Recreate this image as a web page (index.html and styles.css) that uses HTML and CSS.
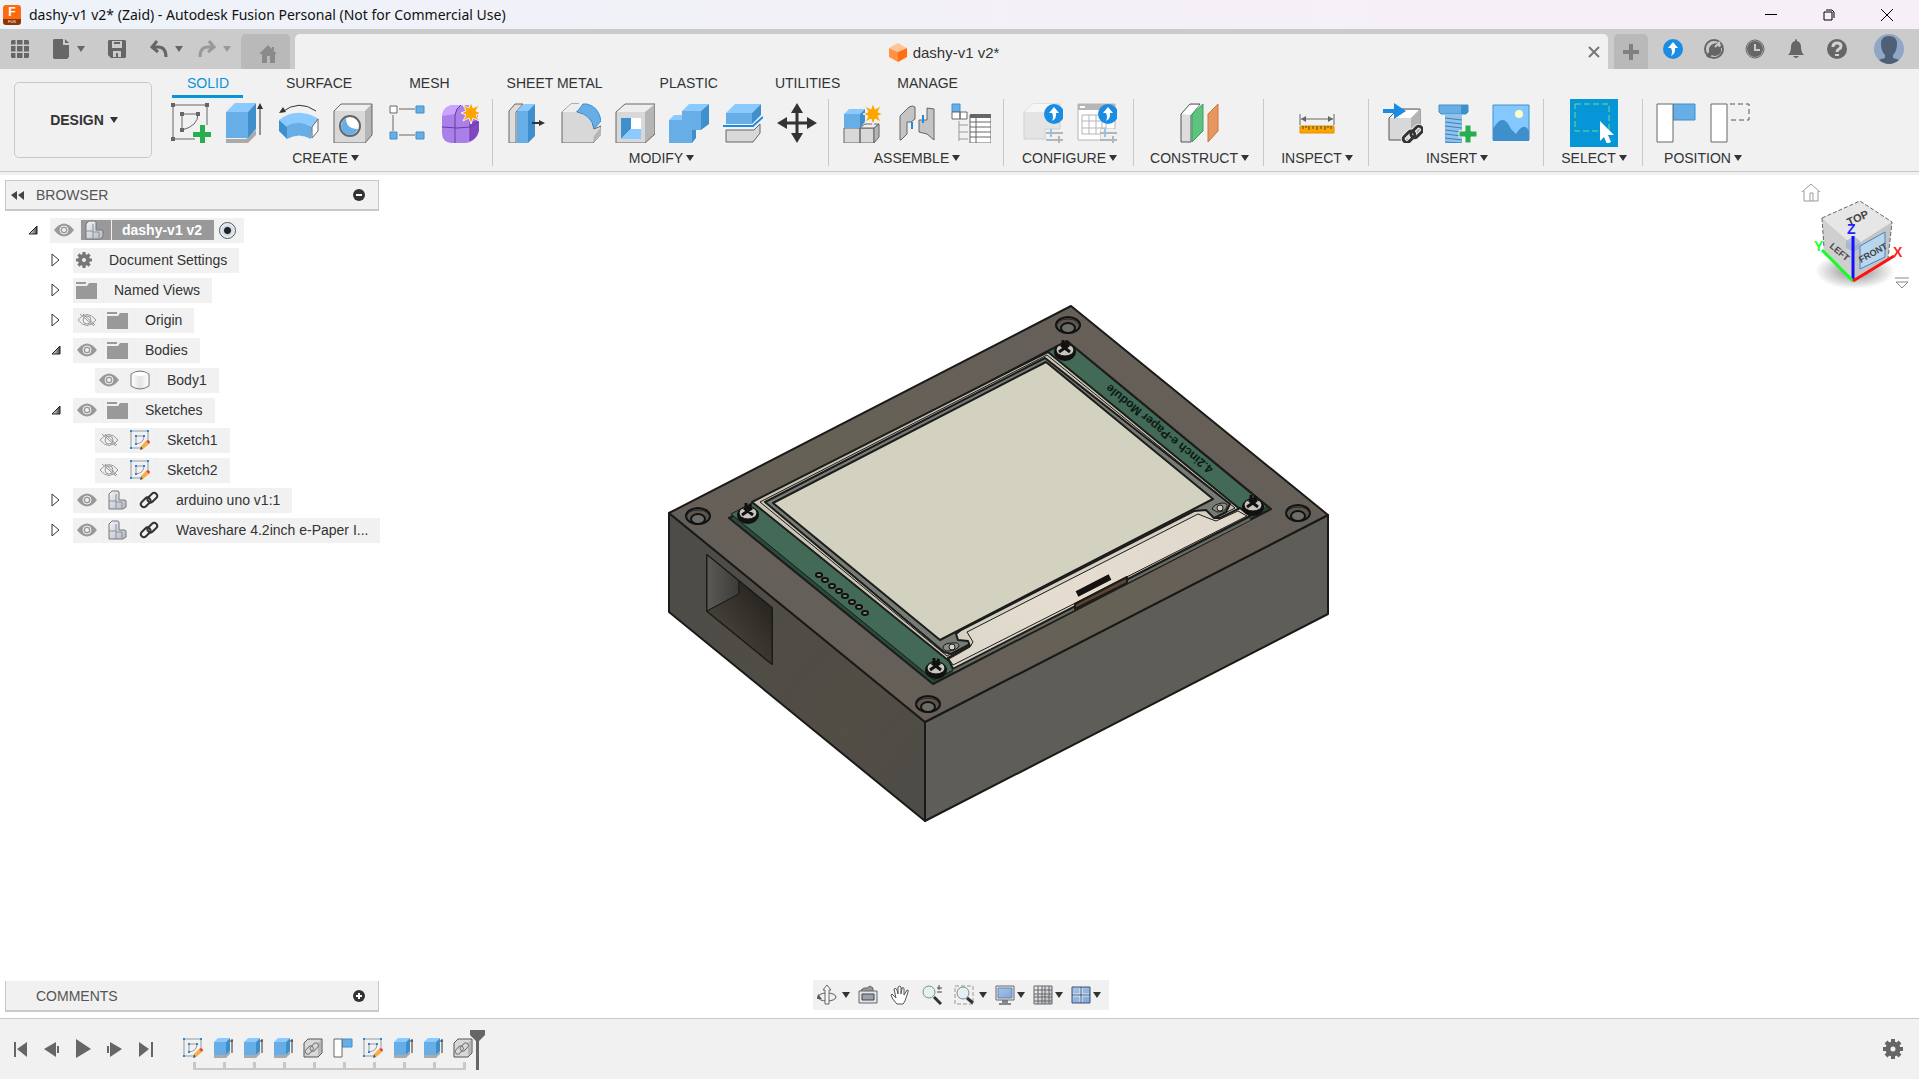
FILE: index.html
```html
<!DOCTYPE html>
<html lang="en">

<head>
    <meta charset="UTF-8">
    <meta name="viewport" content="width=device-width, initial-scale=1.0">
    <title>dashy-v1 v2* (Zaid) - Autodesk Fusion Personal</title>
    <link rel="stylesheet" href="styles.css">
</head>

<body>
    <!-- icon sprite -->
    <svg class="sprite" aria-hidden="true">
        <defs>
            <linearGradient id="g-part" x1="0" y1="0" x2="1" y2="1">
                <stop offset="0" stop-color="#f0f4fa"/><stop offset="1" stop-color="#b4b9c2"/>
            </linearGradient>
            <linearGradient id="g-body" x1="0" y1="0" x2="1" y2="0">
                <stop offset="0" stop-color="#fff"/><stop offset=".5" stop-color="#e4e4e6"/><stop offset="1" stop-color="#fff"/>
            </linearGradient>
            <linearGradient id="g-screen" x1="0" y1="0" x2="1" y2="1">
                <stop offset="0" stop-color="#a8c4e8"/><stop offset="1" stop-color="#7fa6d8"/>
            </linearGradient>
            <linearGradient id="g-tri" x1="0" y1="0" x2="1" y2="0">
                <stop offset="0" stop-color="#fff"/><stop offset="1" stop-color="#444"/>
            </linearGradient>
        </defs>

        <!-- bar icons -->
        <symbol id="i-grid" viewBox="0 0 20 20"><path fill="#666" d="M2 1h4v5H1V2zM7 1h6v5H7zM14 1h4l1 1v4h-5zM1 7h5v6H1zM7 7h6v6H7zM14 7h5v6h-5zM1 14h5v5H2l-1-1zM7 14h6v5H7zM14 14h5v4l-1 1h-4z"/><path d="M6 1v18M13 1v18M1 6h18M1 13h18" stroke="#cbcbcb"/></symbol>
        <symbol id="i-file" viewBox="0 0 20 20"><path fill="#666" d="M3 0h9v6h6v12l-2 2H3l-1-1V1zM14 0l4 4h-4z"/></symbol>
        <symbol id="i-save" viewBox="0 0 20 20"><path fill="#666" fill-rule="evenodd" d="M2 1h16l1 1v16l-1 1H4l-3-3V2zM5 2v7h10V2zm1 10v6h3v-4h2v4h3v-6zM7 3h6v2H7z"/></symbol>
        <symbol id="i-undo" viewBox="0 0 20 20"><path d="M8 2L3 8l6 5M3 8h6q8 0 8 10" fill="none" stroke="currentColor" stroke-width="3"/></symbol>
        <symbol id="i-redo" viewBox="0 0 20 20"><path d="M12 2l5 6-6 5M17 8h-6q-8 0-8 10" fill="none" stroke="currentColor" stroke-width="3"/></symbol>
        <symbol id="i-home" viewBox="0 0 20 20"><path fill="#8a8a8a" d="M10 1l9 9h-2v9h-5v-7H9v7H4v-9H1zM14 3h2v3h-2z"/></symbol>
        <symbol id="i-up" viewBox="0 0 20 20"><circle cx="10" cy="10" r="10" fill="#1b8ce4"/><path fill="#fff" d="M10 3l5 6h-3q1 5-4 8 2-4 0-8H5z"/></symbol>
        <symbol id="i-plug" viewBox="0 0 20 20"><circle cx="10" cy="10" r="9" fill="none" stroke="#666" stroke-width="2"/><path fill="#666" d="M2 17q2-3 3-4-1-6 4-8l2-1 6 6q1 6-6 7-2 0-3-1l-3 3z"/><path d="M9 9l5-5M13 12l5-5" stroke="#666" stroke-width="2"/><path d="M11 8l5-5" stroke="#cbcbcb" stroke-width="2"/></symbol>
        <symbol id="i-clock" viewBox="0 0 20 20"><circle cx="10" cy="10" r="9" fill="none" stroke="#666"/><circle cx="10" cy="10" r="8" fill="#666"/><path d="M10 5v6h5" fill="none" stroke="#cbcbcb" stroke-width="2"/></symbol>
        <symbol id="i-bell" viewBox="0 0 20 20"><path fill="#666" d="M10 0q1 0 1 2 4 1 4 6 0 5 3 8H2q3-3 3-8 0-5 4-6 0-2 1-2zM7 17h6q-3 4-6 0z"/></symbol>
        <symbol id="i-help" viewBox="0 0 20 20"><circle cx="10" cy="10" r="10" fill="#666"/><path d="M6 8q0-4 4-4t4 3q0 2-2 3t-2 3" fill="none" stroke="#d2d2d2" stroke-width="3"/><path d="M8 15h4v2H8z" fill="#d2d2d2"/></symbol>
        <symbol id="i-user" viewBox="0 0 30 30"><circle cx="15" cy="15" r="15" fill="#8fa6c6"/><path fill="#4f6076" d="M15 2q8 0 8 8 0 7-4 11v3q4 1 6 2-10 8-20 0 2-1 6-2v-3q-4-4-4-11 0-8 8-8z"/></symbol>
        <symbol id="i-doc" viewBox="0 0 20 20"><path fill="#ffc49a" d="M10 1l9 5-9 4-9-4z"/><path fill="#ff9244" d="M1 6l9 4v10l-9-5z"/><path fill="#ff6f0f" d="M19 6l-9 4v10l9-5z"/></symbol>

        <!-- ribbon tools, 40px -->
        <symbol id="i-sketch" viewBox="0 0 40 40"><path d="M2 2h34v20M2 2v34h22M11 11h16M11 11v16M27 11q0 12-16 16" fill="none" stroke="#666"/><path fill="#666" d="M0 0h4v4H0zM34 0h4v4h-4zM0 34h4v4H0zM9 9h4v4H9zM25 9h4v4h-4zM9 25h4v4H9z"/><path fill="#27ae4f" d="M29 22h5v7h7v5h-7v7h-5v-7h-7v-5h7z"/></symbol>
        <symbol id="i-extrude" viewBox="0 0 40 40"><path fill="#aaa" d="M1 36h20l10-9v5l-9 9H1z"/><path fill="#68aee6" d="M1 9h22v26H1z"/><path fill="#8acaff" d="M10 0h21l-8 9H1z"/><path fill="#3f8fcd" d="M31 0v26l-8 9V9z"/><path d="M35 32V4" stroke="#333"/><path fill="#333" d="M35 0l3 6h-6z"/></symbol>
        <symbol id="i-revolve" viewBox="0 0 40 40"><path d="M3 9Q20-4 37 8" fill="none" stroke="#333"/><path fill="#333" d="M0 10l4-6 3 5z"/><path fill="#8acaff" d="M0 17Q18 3 40 16l-7 8Q20 16 8 24z"/><path fill="#68aee6" d="M8 23q12-7 25 1l-1 12Q20 29 8 36z"/><path fill="#3f8fcd" d="M0 17l8 7v12l-8-8z"/><path d="M33 24l6-8v12l-6 7z" fill="#fff" stroke="#666"/></symbol>
        <symbol id="i-hole" viewBox="0 0 40 40"><path d="M1 8l7-7h31v31l-7 8H1z" fill="#d8d8d8"/><path d="M1 8l7-7h31l-7 7z" fill="#eee"/><path d="M39 1v31l-7 8V8z" fill="#b5b5b5"/><path d="M1 8l7-7h31v31l-7 8H1z" fill="none" stroke="#666"/><circle cx="17" cy="23" r="10" fill="#fff" stroke="#666" stroke-width="2"/><path fill="#68aee6" d="M13 15q0 11 12 11-3 6-9 6-6-1-8-7 0-7 5-10z"/></symbol>
        <symbol id="i-pattern" viewBox="0 0 40 40"><path d="M12 6h16M6 12v16M12 32h16" stroke="#666" stroke-width="1"/><path d="M3 3h7v7H3z" fill="#fff" stroke="#666"/><path d="M29 3h8v7h-8zM3 29h7v7H3zM29 29h8v7h-8z" fill="#68aee6" stroke="#3f8fcd"/></symbol>
        <symbol id="i-form" viewBox="0 0 40 40"><path d="M1 14Q2 2 14 2h12q11 2 11 12v15q-3 10-12 11H10q-9-1-9-10z" fill="#a97fe8"/><path d="M1 14Q2 2 14 2h12q-10 0-12 9L1 13z" fill="#c9a5ff"/><path d="M29 20l9-4v12q-2 8-9 10z" fill="#8049c0"/><path d="M1 24q16 2 28 0l9-5M14 40V12q1-7 6-10M29 38V14" fill="none" stroke="#6c3aa8"/><path fill="#ffa500" stroke="#f1f1f1" d="M30-1l2 6 6-3-3 6 5 2-5 2 3 6-6-3-2 6-2-6-6 3 3-6-5-2 5-2-3-6 6 3z"/></symbol>
        <symbol id="i-press" viewBox="0 0 40 40"><path d="M2 8l6-7h8L9 9v31H2z" fill="#ddd" stroke="#666"/><path fill="#68aee6" d="M10 8h11v32H10z"/><path fill="#8acaff" d="M17 1h11l-7 7H10z"/><path fill="#3f8fcd" d="M28 1v32l-7 7V8z"/><path d="M25 20h9" stroke="#333" stroke-width="2"/><path fill="#333" d="M32 17l6 3-6 3z"/></symbol>
        <symbol id="i-fillet" viewBox="0 0 40 40"><path d="M1 9l9-8h8l-3 7q16 1 18 18l7-3v8l-8 9H1z" fill="#d8d8d8" stroke="#666"/><path d="M1 9l9-8h10l-5 8z" fill="#eee"/><path d="M33 33l7-9v8l-8 8z" fill="#b5b5b5"/><path fill="#68aee6" stroke="#3f8fcd" d="M22 1h4q12 3 14 17l-7 8Q31 12 16 9z"/></symbol>
        <symbol id="i-shell" viewBox="0 0 40 40"><path d="M1 9l9-8h30l-10 8z" fill="#eee"/><path d="M1 9h29v31H1z" fill="#d8d8d8"/><path d="M40 1v30l-10 9V9z" fill="#b5b5b5"/><path d="M1 9l9-8h30v30l-10 9H1z" fill="none" stroke="#666"/><path d="M6 15h20v21H6z" fill="#fff"/><path fill="#3f8fcd" d="M6 15h10v11L6 36z"/><path fill="#8acaff" d="M16 26h10v10H6z"/></symbol>
        <symbol id="i-combine" viewBox="0 0 40 40"><path fill="#68aee6" d="M0 17h13V8h19v19h-9v13H0z"/><path fill="#8acaff" d="M13 8l7-7h20l-8 7zM0 17l5-5h8v5z"/><path fill="#3f8fcd" d="M40 1v20l-8 6V8zM23 27h4v8l-4 5z"/></symbol>
        <symbol id="i-split" viewBox="0 0 40 40"><path fill="#68aee6" d="M3 10h26v11H3z"/><path fill="#8acaff" d="M12 1h26l-9 9H3z"/><path fill="#3f8fcd" d="M38 1v11l-9 9V10z"/><path d="M0 23h30l10-9" stroke="#1b8ce4" fill="none" stroke-width="2"/><path d="M3 27h28l6-6v9l-7 9H3z" fill="#d8d8d8" stroke="#666"/></symbol>
        <symbol id="i-move" viewBox="0 0 40 40"><path d="M20 5v30M5 20h30" stroke="#333" stroke-width="3"/><path fill="#333" d="M20 0l6 10H14zM20 40l6-10H14zM0 20l10-6v12zM40 20l-10-6v12z"/></symbol>
        <symbol id="i-component" viewBox="0 0 40 40"><path d="M1 25h16v15H1zM17 25h14v15H17z" fill="#d8d8d8" stroke="#666"/><path d="M17 25l5-4h14l-5 4z" fill="#eee" stroke="#666"/><path d="M36 21v13l-5 6V25z" fill="#b5b5b5" stroke="#666"/><path fill="#68aee6" d="M1 11h16v14H1z"/><path fill="#8acaff" d="M6 6h16l-5 5H1z"/><path fill="#3f8fcd" d="M22 6v13l-5 6V11z"/><path fill="#ffa500" stroke="#f1f1f1" d="M30 0l2 6 6-3-3 6 5 2-5 2 3 6-6-3-2 6-2-6-6 3 3-6-5-2 5-2-3-6 6 3z"/></symbol>
        <symbol id="i-joint" viewBox="0 0 40 40"><path d="M3 13l9-9q4-2 6 0v12l-4 3-4 0v12l-6 6H3z" fill="#c4c4c4" stroke="#666"/><path d="M37 6v31l-7-6-8-2V17l8 0V5z" fill="#c4c4c4" stroke="#666"/><path d="M15 19v7M26 12v8" stroke="#1b8ce4" stroke-width="2"/></symbol>
        <symbol id="i-bom" viewBox="0 0 40 40"><path d="M1 1h8v8H1z" fill="#68aee6" stroke="#3f8fcd"/><path d="M1 9h8v7H1zM9 9h7v7H9z" fill="#fff" stroke="#666"/><path d="M8 18v20M8 22h9M8 29h9M8 36h9" stroke="#999" fill="none"/><path d="M19 12h21v28H19z" fill="#fff" stroke="#666"/><path fill="#666" d="M19 11h21v4H19z"/><path d="M19 19h21M19 24h21M19 29h21M19 34h21M25 15v25" stroke="#666"/></symbol>
        <symbol id="i-config" viewBox="0 0 40 40"><path d="M1 9l9-8h27v25H22v10H1z" fill="#e4e4e4" stroke="#cfcfcf"/><path d="M1 9l9-8h20v8z" fill="#f6f6f6"/><path d="M23 30h18M23 37h18" stroke="#b5b5b5" stroke-width="2"/><path d="M28 26v8" stroke="#8cc4f0" stroke-width="2"/><path d="M36 33v8" stroke="#b5b5b5" stroke-width="2"/><circle cx="31" cy="11" r="10" fill="#1b8ce4"/><path fill="#fff" d="M31 4l5 6h-3q1 5-4 8 2-4 0-8h-3z"/></symbol>
        <symbol id="i-ctable" viewBox="0 0 40 40"><path d="M1 1h37v25H24v11H1z" fill="#fff" stroke="#b5b5b5"/><path fill="#b5b5b5" d="M1 1h37v6H1z"/><path fill="#fff" d="M3 3h5v2H3z"/><path d="M5 12h24v19H5zM5 18h24M5 25h24M12 12v19M19 12v19M25 12v19" fill="none" stroke="#b5b5b5"/><path fill="#f1f1f1" d="M24 26h17v15H24z"/><path d="M23 30h18M23 37h18" stroke="#b5b5b5" stroke-width="2"/><path d="M28 26v8" stroke="#8cc4f0" stroke-width="2"/><path d="M36 33v8" stroke="#b5b5b5" stroke-width="2"/><circle cx="31" cy="11" r="10" fill="#1b8ce4"/><path fill="#fff" d="M31 4l5 6h-3q1 5-4 8 2-4 0-8h-3z"/></symbol>
        <symbol id="i-plane" viewBox="0 0 40 40"><path d="M1 11l9-10h10L11 12v27H1z" fill="#ddd" stroke="#555"/><path fill="#fff" d="M2 11l8-9h9l-8 10z"/><path fill="#5cc47c" stroke="#39a05c" d="M12 11l11-10v27L12 39z"/><path fill="#e8965f" stroke="#c97742" d="M28 11L38 1v27L28 39z"/></symbol>
        <symbol id="i-measure" viewBox="0 0 40 40"><path d="M3 11v11M37 11v11M4 16h32" stroke="#666"/><path fill="#666" d="M4 16l5-3v6zM36 16l-5-3v6z"/><path fill="#ffa500" stroke="#e09000" d="M3 23h34v7H3z"/><path d="M6 23v3M9 23v2M12 23v4M16 23v3M20 23v4M24 23v3M28 23v4M31 23v2M34 23v3" stroke="#444"/></symbol>
        <symbol id="i-derive" viewBox="0 0 40 40"><path d="M6 15l9-9h22v20l-9 11H6z" fill="#d8d8d8" stroke="#555"/><path d="M7 15l8-8h21l-8 8z" fill="#fff"/><path d="M37 6v20l-9 9V15z" fill="#b5b5b5"/><path fill="#1b8ce4" d="M0 6h11V0l12 8-12 8v-6H0z"/><g fill="none" stroke="#f1f1f1" stroke-width="5"><rect x="19" y="30" width="13" height="7" rx="3" transform="rotate(-45 26 33)"/><rect x="27" y="26" width="13" height="7" rx="3" transform="rotate(-45 33 29)"/></g><g fill="none" stroke="#333" stroke-width="3"><rect x="19" y="30" width="13" height="7" rx="3" transform="rotate(-45 26 33)"/><rect x="27" y="26" width="13" height="7" rx="3" transform="rotate(-45 33 29)"/></g></symbol>
        <symbol id="i-bolt" viewBox="0 0 40 40"><path fill="#68aee6" stroke="#3f8fcd" d="M2 2h29v7l-2 2H4L2 9z"/><path fill="#3f8fcd" d="M24 2h7v7l-2 2h-5z"/><path fill="#8fc3ee" d="M8 12h17v28H8z"/><path d="M8 15l17 2M8 19l17 2M8 23l17 2M8 27l17 2M8 31l17 2M8 35l17 2M8 39l17 1" stroke="#3f7fb5"/><path fill="#27ae4f" stroke="#f1f1f1" d="M28 22h6v6h6v6h-6v6h-6v-6h-6v-6h6z"/></symbol>
        <symbol id="i-image" viewBox="0 0 40 40"><path fill="#84c8ff" stroke="#3f8fcd" d="M2 2h36v35H2z"/><path fill="#3f8fcd" d="M2 26q10-18 18 0l5 5q8-13 13-3v10H2z"/><circle cx="28" cy="11" r="4" fill="#ffffc8"/></symbol>
        <symbol id="i-select" viewBox="0 0 40 40"><path d="M1 1h34v27H1z" fill="none" stroke="#6fdc86" stroke-dasharray="6 3"/><path fill="#fff" d="M26 18l14 14h-6l3 7-4 2-3-7-4 4z"/></symbol>
        <symbol id="i-capture" viewBox="0 0 40 40"><path d="M17 1h22v16H17z" fill="#68aee6" stroke="#3f8fcd"/><path d="M1 1h16v38H1z" fill="#fff" stroke="#666"/></symbol>
        <symbol id="i-revert" viewBox="0 0 40 40"><path d="M20 1h19v16H20" fill="none" stroke="#555" stroke-dasharray="5 3"/><path d="M1 1h16v38H1z" fill="#fff" stroke="#666"/></symbol>

        <!-- tree -->
        <symbol id="i-eye" viewBox="0 0 20 14"><path fill="#999" d="M0 7Q10-6 20 7 10 20 0 7z"/><circle cx="10" cy="7" r="4" fill="none" stroke="#f1f1f1" stroke-width="1"/><circle cx="10" cy="7" r="2" fill="#f1f1f1"/></symbol>
        <symbol id="i-eyeoff" viewBox="0 0 20 14"><path fill="none" stroke="#999" d="M1 7Q10-4 19 7 10 18 1 7zM3 1l14 12M6 1l12 11"/><circle cx="10" cy="7" r="4" fill="none" stroke="#999"/></symbol>
        <symbol id="i-folder" viewBox="0 0 21 17"><path fill="#999" d="M0 0h10v2H0zM0 4h11l2-3h8v16H0z"/></symbol>
        <symbol id="i-gear" viewBox="0 0 20 20"><circle cx="10" cy="10" r="5" fill="none" stroke="currentColor" stroke-width="5"/><path d="M10 0v4M10 16v4M0 10h4M16 10h4M3 3l3 3M14 14l3 3M17 3l-3 3M6 14l-3 3" stroke="currentColor" stroke-width="4"/></symbol>
        <symbol id="i-body" viewBox="0 0 20 20"><path d="M1 4q9-6 18 0v12q-9 6-18 0z" fill="url(#g-body)" stroke="#777"/><path d="M2 4q8-4 16 0-8 4-16 0z" fill="#fff"/></symbol>
        <symbol id="i-part" viewBox="0 0 20 20"><path d="M1 4l3-3h6l1 1v8h6l1 1v6l-3 2H1z" fill="url(#g-part)" stroke="#777"/><path d="M1 11h7M8 4v15M8 12h6v6" fill="none" stroke="#8b8f96"/></symbol>
        <symbol id="i-link" viewBox="0 0 20 20"><g fill="none" stroke="currentColor" stroke-width="2"><rect x="1" y="9" width="11" height="6" rx="3" transform="rotate(-45 7 12)"/><rect x="8" y="5" width="11" height="6" rx="3" transform="rotate(-45 13 8)"/></g></symbol>
        <symbol id="i-sk" viewBox="0 0 20 20"><path d="M2 1h16v12M1 2v16h10M6 6h8M6 6v8M14 6q0 7-8 8" fill="none" stroke="#999"/><path fill="#1b8ce4" d="M0 0h2v2H0zM17 0h2v2h-2zM0 17h2v2H0zM5 5h2v2H5zM13 5h2v2h-2zM5 13h2v2H5z"/><path fill="#f5b041" d="M16 11l3 3-6 5-2-3z"/><path fill="#e33" d="M16 11q3-2 4 1l-1 2z"/><path fill="#555" d="M11 16l2 3-3 1z"/></symbol>
        <symbol id="i-closed" viewBox="0 0 10 14"><path d="M1 1l7 6-7 6z" fill="#fff" stroke="#333"/></symbol>
        <symbol id="i-open" viewBox="0 0 10 10"><path d="M9 1v8H1z" fill="url(#g-tri)" stroke="#222"/></symbol>

        <!-- timeline and navigation -->
        <symbol id="i-ext" viewBox="0 0 20 20"><path fill="#aaa" d="M1 17h12l4-4v3l-4 4H1z"/><path fill="#68aee6" d="M1 4h12v13H1z"/><path fill="#8acaff" d="M5 0h12l-4 4H1z"/><path fill="#3f8fcd" d="M17 0v13l-4 4V4z"/><path d="M19 1v14" stroke="#333"/><path d="M17 3h3" stroke="#333"/></symbol>
        <symbol id="i-xref" viewBox="0 0 20 20"><path d="M1 5l4-4h14v14l-4 4H1z" fill="#d8d8d8" stroke="#555"/><path d="M18 2v13l-3 3V5z" fill="#b5b5b5"/><g fill="none" stroke="#777" stroke-width="1"><rect x="2" y="9" width="9" height="5" rx="2" transform="rotate(-45 7 12)"/><rect x="7" y="6" width="9" height="5" rx="2" transform="rotate(-45 12 9)"/></g></symbol>
        <symbol id="i-pos" viewBox="0 0 20 20"><path d="M9 1h10v8H9z" fill="#68aee6" stroke="#3f8fcd"/><path d="M1 1h8v18H1z" fill="#fff" stroke="#666"/></symbol>
        <symbol id="i-first" viewBox="0 0 20 20"><path fill="#666" d="M3 3h2v15H3zM16 3v15L6 10z"/></symbol>
        <symbol id="i-back" viewBox="0 0 20 20"><path fill="#666" d="M14 3v15L2 10zM15 7h2v7h-2z"/></symbol>
        <symbol id="i-play" viewBox="0 0 20 20"><path fill="#666" d="M3 0l15 10L3 19z"/></symbol>
        <symbol id="i-next" viewBox="0 0 20 20"><path fill="#666" d="M6 3v15l12-8zM3 7h2v7H3z"/></symbol>
        <symbol id="i-last" viewBox="0 0 20 20"><path fill="#666" d="M16 3h2v15h-2zM4 3v15l10-8z"/></symbol>
        <symbol id="i-orbit" viewBox="0 0 20 20"><ellipse cx="10" cy="12" rx="9" ry="4" fill="none" stroke="#555"/><path d="M8 19V5H6l4-5 4 5h-2v14z" fill="#f4f7fb" stroke="#666"/><path fill="#555" d="M1 9l4 5H0z"/></symbol>
        <symbol id="i-look" viewBox="0 0 20 20"><path d="M3 7V5l3-2h3l3-2 3 2v4" fill="#999" stroke="#666"/><path d="M1 6h18v12H1z" fill="#e2e5ea" stroke="#666"/><path d="M4 9h12v6H4z" fill="#9aa1ac" stroke="#444"/></symbol>
        <symbol id="i-pan" viewBox="0 0 20 20"><path d="M6 18q-4-4-5-8l1-1 4 4L4 4q2-2 3 1l1 4V2q2-2 3 0v7l1-6q2-1 2 1v6l3-5q2 0 1 2l-3 9-2 3H7z" fill="#fff" stroke="#555"/></symbol>
        <symbol id="i-zoom" viewBox="0 0 20 20"><circle cx="7" cy="7" r="6" fill="#e4f1f4" stroke="#888"/><path d="M12 12l7 7" stroke="#333" stroke-width="3"/><path d="M15 3h5M15 7h5M17 0v5" stroke="#444"/></symbol>
        <symbol id="i-fit" viewBox="0 0 20 20"><path d="M1 1h18v18H1z" fill="none" stroke="#999" stroke-dasharray="4 2"/><circle cx="9" cy="8" r="6" fill="#e4f1f4" stroke="#888"/><path d="M13 13l6 5" stroke="#333" stroke-width="3"/></symbol>
        <symbol id="i-display" viewBox="0 0 20 20"><path d="M7 15h6v3h3v2H4v-2h3z" fill="#888"/><path d="M1 1h18v14H1z" fill="#eee" stroke="#666"/><path fill="url(#g-screen)" stroke="#6484ac" d="M3 3h14v10H3z"/></symbol>
        <symbol id="i-gridset" viewBox="0 0 20 20"><path fill="url(#g-part)" d="M1 1h18v18H1z"/><path d="M1 1h18v18H1zM1 5h18M1 9h18M1 12h18M1 16h18M5 1v18M9 1v18M12 1v18M16 1v18" fill="none" stroke="#666"/></symbol>
        <symbol id="i-views" viewBox="0 0 20 20"><path d="M1 2h18v16H1z" fill="url(#g-screen)" stroke="#3c5577"/><path d="M2 10h16M10 3v14" stroke="#e4eefb" stroke-width="3"/><path d="M1 10h18M10 2v16" stroke="#3c5577"/></symbol>
        <symbol id="i-screw" viewBox="0 0 24 24"><ellipse cx="12" cy="14" rx="11" ry="9" fill="#111"/><ellipse cx="12" cy="12" rx="9" ry="6" fill="#c9c5bc" stroke="#111" stroke-width="1"/><path d="M6 14l10-7M8 7l9 7M10 2v6M15 3l-3 6" stroke="#111" stroke-width="3"/></symbol>
        <symbol id="i-bore" viewBox="0 0 28 20"><ellipse cx="14" cy="10" rx="12" ry="8" fill="#5a564e" stroke="#111" stroke-width="2"/><path d="M2 11Q4 4 14 4t12 7" fill="none" stroke="#222"/><ellipse cx="14" cy="13" rx="7" ry="5" fill="#6c6c69" stroke="#111" stroke-width="2"/></symbol>
    </svg>

    <header class="titlebar">
        <span class="app-logo"><b>F</b><i>FUS</i></span>
        <h1>dashy-v1 v2* (Zaid) - Autodesk Fusion Personal (Not for Commercial Use)</h1>
        <div class="window-buttons">
            <button aria-label="Minimize"><svg width="12" height="12" viewBox="0 0 12 12"><path d="M0 5h12v1H0z"/></svg></button>
            <button aria-label="Restore"><svg width="12" height="12" viewBox="0 0 12 12"><path d="M1 3h8v8H1zM3 1h6l2 2v6" fill="none" stroke="#000"/></svg></button>
            <button aria-label="Close"><svg width="12" height="12" viewBox="0 0 12 12"><path d="M0 0l12 12M12 0L0 12" stroke="#000"/></svg></button>
        </div>
    </header>

    <div class="tabstrip">
        <div class="quick">
            <button aria-label="Data panel"><svg class="i20"><use href="#i-grid"/></svg></button>
            <button class="file" aria-label="File"><svg class="i20"><use href="#i-file"/></svg><span class="caret"></span></button>
            <button class="save" aria-label="Save"><svg class="i20"><use href="#i-save"/></svg></button>
            <button class="undo" aria-label="Undo"><svg class="i20"><use href="#i-undo"/></svg><span class="caret"></span></button>
            <button class="redo" aria-label="Redo"><svg class="i20"><use href="#i-redo"/></svg><span class="caret"></span></button>
        </div>
        <button class="home-tab" aria-label="Home"><svg class="i20"><use href="#i-home"/></svg></button>
        <div class="doc-tab">
            <span class="doc-name"><svg class="i20"><use href="#i-doc"/></svg>dashy-v1 v2*</span>
            <button aria-label="Close document"><svg width="12" height="12" viewBox="0 0 12 12"><path d="M1 1l10 10M11 1L1 11" stroke="#777" stroke-width="2"/></svg></button>
        </div>
        <button class="new-tab" aria-label="New document"><svg width="16" height="16" viewBox="0 0 16 16"><path d="M8 0v16M0 8h16" stroke="#808080" stroke-width="4"/></svg></button>
        <div class="account">
            <button aria-label="Updates"><svg class="i20"><use href="#i-up"/></svg></button>
            <button aria-label="Extensions"><svg class="i20"><use href="#i-plug"/></svg></button>
            <button aria-label="Job status"><svg class="i20"><use href="#i-clock"/></svg></button>
            <button aria-label="Notifications"><svg class="i20"><use href="#i-bell"/></svg></button>
            <button aria-label="Help"><svg class="i20"><use href="#i-help"/></svg></button>
            <button class="avatar" aria-label="Account"><svg class="i30"><use href="#i-user"/></svg></button>
        </div>
    </div>

    <div class="toolbar">
        <button class="workspace">DESIGN <span class="caret"></span></button>
        <div class="ribbon">
            <nav class="ribbon-tabs">
                <a href="#" class="active">SOLID</a>
                <a href="#">SURFACE</a>
                <a href="#">MESH</a>
                <a href="#">SHEET METAL</a>
                <a href="#">PLASTIC</a>
                <a href="#">UTILITIES</a>
                <a href="#">MANAGE</a>
            </nav>
            <div class="groups">
                <div class="group">
                    <div class="tools">
                        <button aria-label="Create Sketch"><svg class="i40"><use href="#i-sketch"/></svg></button>
                        <button aria-label="Extrude"><svg class="i40"><use href="#i-extrude"/></svg></button>
                        <button aria-label="Revolve"><svg class="i40"><use href="#i-revolve"/></svg></button>
                        <button aria-label="Hole"><svg class="i40"><use href="#i-hole"/></svg></button>
                        <button aria-label="Pattern"><svg class="i40"><use href="#i-pattern"/></svg></button>
                        <button aria-label="Create Form"><svg class="i40"><use href="#i-form"/></svg></button>
                    </div>
                    <button class="menu">CREATE <span class="caret"></span></button>
                </div>
                <div class="group">
                    <div class="tools">
                        <button aria-label="Press Pull"><svg class="i40"><use href="#i-press"/></svg></button>
                        <button aria-label="Fillet"><svg class="i40"><use href="#i-fillet"/></svg></button>
                        <button aria-label="Shell"><svg class="i40"><use href="#i-shell"/></svg></button>
                        <button aria-label="Combine"><svg class="i40"><use href="#i-combine"/></svg></button>
                        <button aria-label="Split Body"><svg class="i40"><use href="#i-split"/></svg></button>
                        <button aria-label="Move"><svg class="i40"><use href="#i-move"/></svg></button>
                    </div>
                    <button class="menu">MODIFY <span class="caret"></span></button>
                </div>
                <div class="group">
                    <div class="tools">
                        <button aria-label="New Component"><svg class="i40"><use href="#i-component"/></svg></button>
                        <button aria-label="Joint"><svg class="i40"><use href="#i-joint"/></svg></button>
                        <button aria-label="Bill of Materials"><svg class="i40"><use href="#i-bom"/></svg></button>
                    </div>
                    <button class="menu">ASSEMBLE <span class="caret"></span></button>
                </div>
                <div class="group">
                    <div class="tools">
                        <button aria-label="Configure"><svg class="i40"><use href="#i-config"/></svg></button>
                        <button aria-label="Configuration Table"><svg class="i40"><use href="#i-ctable"/></svg></button>
                    </div>
                    <button class="menu">CONFIGURE <span class="caret"></span></button>
                </div>
                <div class="group">
                    <div class="tools">
                        <button aria-label="Offset Plane"><svg class="i40"><use href="#i-plane"/></svg></button>
                    </div>
                    <button class="menu">CONSTRUCT <span class="caret"></span></button>
                </div>
                <div class="group">
                    <div class="tools">
                        <button aria-label="Measure"><svg class="i40"><use href="#i-measure"/></svg></button>
                    </div>
                    <button class="menu">INSPECT <span class="caret"></span></button>
                </div>
                <div class="group">
                    <div class="tools">
                        <button aria-label="Insert Derive"><svg class="i40"><use href="#i-derive"/></svg></button>
                        <button aria-label="Insert Fastener"><svg class="i40"><use href="#i-bolt"/></svg></button>
                        <button aria-label="Canvas"><svg class="i40"><use href="#i-image"/></svg></button>
                    </div>
                    <button class="menu">INSERT <span class="caret"></span></button>
                </div>
                <div class="group">
                    <div class="tools">
                        <button class="selected" aria-label="Select"><svg class="i40"><use href="#i-select"/></svg></button>
                    </div>
                    <button class="menu">SELECT <span class="caret"></span></button>
                </div>
                <div class="group">
                    <div class="tools">
                        <button aria-label="Capture Position"><svg class="i40"><use href="#i-capture"/></svg></button>
                        <button aria-label="Revert Position"><svg class="i40"><use href="#i-revert"/></svg></button>
                    </div>
                    <button class="menu">POSITION <span class="caret"></span></button>
                </div>
            </div>
        </div>
    </div>

    <main class="viewport">
        <svg class="scene" viewBox="0 175 1919 843">
            <defs>
                <linearGradient id="m-top" x1="0" y1="1" x2="1" y2="0">
                    <stop offset="0" stop-color="#666155"/><stop offset=".25" stop-color="#655f59"/><stop offset=".45" stop-color="#666155"/><stop offset=".7" stop-color="#655f59"/><stop offset="1" stop-color="#656055"/>
                </linearGradient>
                <linearGradient id="m-left" x1="0" y1="0" x2="1" y2="1">
                    <stop offset="0" stop-color="#4d4c48"/><stop offset=".7" stop-color="#524d45"/><stop offset="1" stop-color="#4d4c48"/>
                </linearGradient>
                <linearGradient id="m-hole" x1="0" y1="0" x2="1" y2="0">
                    <stop offset="0" stop-color="#5b5a57"/><stop offset="1" stop-color="#3c3b38"/>
                </linearGradient>
                <linearGradient id="m-floor" x1="0" y1="1" x2="1" y2="0">
                    <stop offset="0" stop-color="#575146"/><stop offset="1" stop-color="#1f1d1a"/>
                </linearGradient>
                <linearGradient id="m-flap" x1="0" y1="1" x2="1" y2="0">
                    <stop offset="0" stop-color="#d9d6c9"/><stop offset=".4" stop-color="#e6ddd0"/><stop offset="1" stop-color="#dfd8ca"/>
                </linearGradient>
                <radialGradient id="m-shadow">
                    <stop offset="0" stop-color="#555" stop-opacity=".7"/><stop offset="1" stop-color="#555" stop-opacity="0"/>
                </radialGradient>
            </defs>

            <!-- enclosure -->
            <g stroke="#1a1a18" stroke-width="2" stroke-linejoin="round">
                <path fill="url(#m-left)" d="M669 513L925 722V821L669 612z"/>
                <path fill="#5f5d58" d="M1328 515L925 722V821L1328 614z"/>
                <path fill="url(#m-top)" d="M669 513L1071 306 1328 515 925 722z"/>
                <path fill="#3c3b38" d="M707 555L772 608V664L707 611z"/>
                <path fill="url(#m-hole)" stroke-width="1" d="M707 555L739 581V594L707 611z"/>
                <path fill="url(#m-floor)" stroke-width="1" d="M739 581L772 608V664L707 611 739 594z"/>
            </g>

            <!-- display board -->
            <g stroke="#1c1c1a" stroke-linejoin="round">
                <path fill="#2a4a3d" stroke-width="2" d="M729 518L1067 341 1271 509 933 684z"/>
                <path fill="#426a57" d="M731 514L1067 342 1267 507 934 680z"/>
                <path fill="#c9c6b7" stroke-width="2" d="M752 502L1048 352 1241 510 949 661z"/>
                <path fill="none" d="M760 502L1047 355 1235 508 947 656z"/>
                <path fill="#777b76" stroke-width="2" d="M765 502L1045 358 1230 504 1226 512 951 654 944 652z"/>
                <path fill="#d3d1c0" stroke-width="2" d="M773 503L1046 362 1213 499 940 640z"/>
                <path fill="#d5d1c4" stroke-width="2" d="M948 658L970 646 968 641 958 640 956 634 961 630 1194 511 1206 510 1214 518 1220 518 1240 508 1250 516 953 669z"/>
                <path fill="url(#m-flap)" d="M970 647L973 642 967 632 1198 514 1208 518 1216 521 1238 511 1247 516 953 665 949 659z"/>
                <path d="M953 671L1250 519" stroke="#6b6a62" stroke-width="2"/>
                <path fill="#8a8c86" d="M943 647q1-4 10-4 6-1 6 3-2 4-10 5-6 0-6-4zM1212 509q2-5 10-6 6 0 5 4-2 5-10 5z"/>
                <circle cx="952" cy="647" r="3" fill="#d3d1c0"/>
                <circle cx="1220" cy="508" r="3" fill="#d3d1c0"/>
                <path d="M1077 594L1110 577" stroke="#14110f" stroke-width="6"/>
                <path fill="#5d4532" stroke-width="2" d="M1075 604L1127 577V583L1075 609z"/>
            </g>
            <g fill="#8e8a80" stroke="#111" stroke-width="2">
                <ellipse cx="819" cy="575" rx="3" ry="2"/>
                <ellipse cx="825" cy="580" rx="3" ry="2"/>
                <ellipse cx="832" cy="586" rx="3" ry="2"/>
                <ellipse cx="839" cy="591" rx="3" ry="2"/>
                <ellipse cx="845" cy="596" rx="3" ry="2"/>
                <ellipse cx="852" cy="602" rx="3" ry="2"/>
                <ellipse cx="859" cy="607" rx="3" ry="2"/>
                <ellipse cx="865" cy="613" rx="3" ry="2"/>
            </g>
            <text class="board-text" transform="translate(1214 468) rotate(219)">4.2inch e-Paper Module</text>
            <use href="#i-screw" x="1053" y="338" width="24" height="24"/>
            <use href="#i-screw" x="736" y="501" width="24" height="24"/>
            <use href="#i-screw" x="1241" y="493" width="24" height="24"/>
            <use href="#i-screw" x="924" y="656" width="24" height="24"/>
            <use href="#i-bore" x="1054" y="315" width="28" height="20"/>
            <use href="#i-bore" x="684" y="506" width="28" height="20"/>
            <use href="#i-bore" x="1284" y="503" width="28" height="20"/>
            <use href="#i-bore" x="914" y="694" width="28" height="20"/>
        </svg>

        <aside class="browser">
            <div class="panel-head">
                <button aria-label="Collapse"><svg width="13" height="9" viewBox="0 0 13 9"><path fill="#444" d="M6 0v9L0 4zM13 0v9L7 4z"/></svg></button>
                <h2>BROWSER</h2>
                <button aria-label="Minimize panel"><svg width="12" height="12" viewBox="0 0 12 12"><circle cx="6" cy="6" r="6" fill="#333"/><path d="M3 6h6" stroke="#fff" stroke-width="2"/></svg></button>
            </div>
            <ul class="tree">
                <li>
                    <div class="row root">
                        <button class="toggle" aria-label="Toggle"><svg width="10" height="10"><use href="#i-open"/></svg></button>
                        <div class="chip">
                            <span class="cell"><svg class="eye"><use href="#i-eye"/></svg></span>
                            <span class="highlight"><span class="cell"><svg class="i20"><use href="#i-part"/></svg></span><span class="label">dashy-v1 v2</span></span>
                            <input type="radio" name="active" aria-label="Activate dashy-v1 v2" checked>
                        </div>
                    </div>
                    <ul>
                        <li>
                            <div class="row"><button class="toggle" aria-label="Toggle"><svg width="10" height="14"><use href="#i-closed"/></svg></button>
                                <div class="chip"><span class="cell narrow"><svg class="i16"><use href="#i-gear"/></svg></span><span class="label">Document Settings</span></div></div>
                        </li>
                        <li>
                            <div class="row"><button class="toggle" aria-label="Toggle"><svg width="10" height="14"><use href="#i-closed"/></svg></button>
                                <div class="chip"><span class="cell"><svg class="folder"><use href="#i-folder"/></svg></span><span class="label">Named Views</span></div></div>
                        </li>
                        <li>
                            <div class="row"><button class="toggle" aria-label="Toggle"><svg width="10" height="14"><use href="#i-closed"/></svg></button>
                                <div class="chip"><span class="cell"><svg class="eye"><use href="#i-eyeoff"/></svg></span><span class="cell"><svg class="folder"><use href="#i-folder"/></svg></span><span class="label">Origin</span></div></div>
                        </li>
                        <li>
                            <div class="row"><button class="toggle" aria-label="Toggle"><svg width="10" height="10"><use href="#i-open"/></svg></button>
                                <div class="chip"><span class="cell"><svg class="eye"><use href="#i-eye"/></svg></span><span class="cell"><svg class="folder"><use href="#i-folder"/></svg></span><span class="label">Bodies</span></div></div>
                            <ul>
                                <li>
                                    <div class="row"><div class="chip"><span class="cell"><svg class="eye"><use href="#i-eye"/></svg></span><span class="cell"><svg class="i20"><use href="#i-body"/></svg></span><span class="label">Body1</span></div></div>
                                </li>
                            </ul>
                        </li>
                        <li>
                            <div class="row"><button class="toggle" aria-label="Toggle"><svg width="10" height="10"><use href="#i-open"/></svg></button>
                                <div class="chip"><span class="cell"><svg class="eye"><use href="#i-eye"/></svg></span><span class="cell"><svg class="folder"><use href="#i-folder"/></svg></span><span class="label">Sketches</span></div></div>
                            <ul>
                                <li>
                                    <div class="row"><div class="chip"><span class="cell"><svg class="eye"><use href="#i-eyeoff"/></svg></span><span class="cell"><svg class="i20"><use href="#i-sk"/></svg></span><span class="label">Sketch1</span></div></div>
                                </li>
                                <li>
                                    <div class="row"><div class="chip"><span class="cell"><svg class="eye"><use href="#i-eyeoff"/></svg></span><span class="cell"><svg class="i20"><use href="#i-sk"/></svg></span><span class="label">Sketch2</span></div></div>
                                </li>
                            </ul>
                        </li>
                        <li>
                            <div class="row"><button class="toggle" aria-label="Toggle"><svg width="10" height="14"><use href="#i-closed"/></svg></button>
                                <div class="chip"><span class="cell"><svg class="eye"><use href="#i-eye"/></svg></span><span class="cell"><svg class="i20"><use href="#i-part"/></svg></span><span class="cell"><svg class="i20"><use href="#i-link"/></svg></span><span class="label">arduino uno v1:1</span></div></div>
                        </li>
                        <li>
                            <div class="row"><button class="toggle" aria-label="Toggle"><svg width="10" height="14"><use href="#i-closed"/></svg></button>
                                <div class="chip"><span class="cell"><svg class="eye"><use href="#i-eye"/></svg></span><span class="cell"><svg class="i20"><use href="#i-part"/></svg></span><span class="cell"><svg class="i20"><use href="#i-link"/></svg></span><span class="label">Waveshare 4.2inch e-Paper I...</span></div></div>
                        </li>
                    </ul>
                </li>
            </ul>
        </aside>

        <!-- view cube -->
        <svg class="cube" width="100" height="120" viewBox="1800 175 100 120" role="img" aria-label="View cube">
            <ellipse cx="1855" cy="271" rx="40" ry="18" fill="url(#m-shadow)"/>
            <path d="M1802 192l9-8 9 8M1804 191v10h14v-10M1810 201v-8h3v8" fill="none" stroke="#999"/>
            <path fill="#e6e6e6" d="M1822 218l38-17 32 21-38 24z"/>
            <path fill="#cfcfcf" d="M1822 218l32 28v36l-30-29z"/>
            <path fill="#c4c4c4" d="M1892 222l-38 24v36l34-23z"/>
            <path d="M1822 218l38-17 32 21-4 37M1822 218l2 30" fill="none" stroke="#666" stroke-dasharray="4 2"/>
            <path fill="#b9d6ef" stroke="#3d86c6" d="M1860 246l25-14v25l-25 12z"/>
            <path fill="#8fa9c8" fill-opacity=".6" d="M1846 241l8-5 6 5v7l-6 4-8-4z"/>
            <text class="face top" transform="translate(1849 226) rotate(-24)">TOP</text>
            <text class="face" transform="translate(1829 247) rotate(40)">LEFT</text>
            <text class="face" transform="translate(1861 263) rotate(-29)">FRONT</text>
            <path d="M1853 281v-45" stroke="#11f" stroke-width="3"/>
            <path d="M1853 281l-31-31" stroke="#1f2" stroke-width="3"/>
            <path d="M1853 281l41-25" stroke="#f11" stroke-width="3"/>
            <text class="axis" x="1847" y="234" fill="#22f">Z</text>
            <text class="axis" x="1814" y="251" fill="#2f3">Y</text>
            <text class="axis" x="1893" y="257" fill="#f22">X</text>
        </svg>
        <button class="cube-menu" aria-label="View cube menu"><svg width="14" height="12" viewBox="0 0 14 12"><path d="M0 1h14M1 5h12l-6 6z" fill="none" stroke="#888"/></svg></button>

        <aside class="comments">
            <h2>COMMENTS</h2>
            <button aria-label="Expand comments"><svg width="12" height="12" viewBox="0 0 12 12"><circle cx="6" cy="6" r="6" fill="#333"/><path d="M3 6h6M6 3v6" stroke="#fff" stroke-width="2"/></svg></button>
        </aside>

        <div class="navbar">
            <button aria-label="Orbit"><svg class="i20"><use href="#i-orbit"/></svg><span class="caret"></span></button>
            <button class="plain" aria-label="Look At"><svg class="i20"><use href="#i-look"/></svg></button>
            <button class="plain" aria-label="Pan"><svg class="i20"><use href="#i-pan"/></svg></button>
            <button class="plain" aria-label="Zoom"><svg class="i20"><use href="#i-zoom"/></svg></button>
            <button aria-label="Fit"><svg class="i20"><use href="#i-fit"/></svg><span class="caret"></span></button>
            <button class="tight" aria-label="Display Settings"><svg class="i20"><use href="#i-display"/></svg><span class="caret"></span></button>
            <button class="tight" aria-label="Grid and Snaps"><svg class="i20"><use href="#i-gridset"/></svg><span class="caret"></span></button>
            <button class="tight" aria-label="Viewports"><svg class="i20"><use href="#i-views"/></svg><span class="caret"></span></button>
        </div>
    </main>

    <footer class="timeline">
        <div class="playback">
            <button aria-label="Go to start"><svg class="i20"><use href="#i-first"/></svg></button>
            <button aria-label="Step back"><svg class="i20"><use href="#i-back"/></svg></button>
            <button aria-label="Play"><svg class="i20"><use href="#i-play"/></svg></button>
            <button aria-label="Step forward"><svg class="i20"><use href="#i-next"/></svg></button>
            <button aria-label="Go to end"><svg class="i20"><use href="#i-last"/></svg></button>
        </div>
        <div class="features">
            <button aria-label="Sketch1"><svg class="i20"><use href="#i-sk"/></svg></button>
            <button aria-label="Extrude1"><svg class="i20"><use href="#i-ext"/></svg></button>
            <button aria-label="Extrude2"><svg class="i20"><use href="#i-ext"/></svg></button>
            <button aria-label="Extrude3"><svg class="i20"><use href="#i-ext"/></svg></button>
            <button aria-label="arduino uno"><svg class="i20"><use href="#i-xref"/></svg></button>
            <button aria-label="Position"><svg class="i20"><use href="#i-pos"/></svg></button>
            <button aria-label="Sketch2"><svg class="i20"><use href="#i-sk"/></svg></button>
            <button aria-label="Extrude4"><svg class="i20"><use href="#i-ext"/></svg></button>
            <button aria-label="Extrude5"><svg class="i20"><use href="#i-ext"/></svg></button>
            <button aria-label="Waveshare"><svg class="i20"><use href="#i-xref"/></svg></button>
        </div>
        <svg class="marker" width="15" height="40" viewBox="0 0 15 40"><path fill="#666" d="M0 0h15v5l-6 6v29H6V11L0 5z"/></svg>
        <button class="settings" aria-label="Timeline settings"><svg class="i20"><use href="#i-gear"/></svg></button>
    </footer>
</body>

</html>
```
FILE: styles.css
```css
* {
    box-sizing: border-box;
}

body {
    margin: 0;
    height: 100vh;
    display: flex;
    flex-direction: column;
    overflow: hidden;
    font-family: "Liberation Sans", Arial, sans-serif;
    font-size: 14px;
    color: #333;
    background: #fff;
}

button {
    display: flex;
    align-items: center;
    justify-content: center;
    padding: 0;
    border: none;
    background: none;
    font: inherit;
    color: inherit;
    cursor: pointer;
}

h1,
h2 {
    margin: 0;
    font-size: 14px;
    font-weight: normal;
}

ul {
    list-style: none;
    margin: 0;
    padding: 0;
}

svg {
    display: block;
    flex: none;
}

.sprite {
    position: absolute;
    width: 0;
    height: 0;
}

.i16 {
    width: 16px;
    height: 16px;
}

.i20 {
    width: 20px;
    height: 20px;
}

.i30 {
    width: 30px;
    height: 30px;
}

.i40 {
    width: 40px;
    height: 40px;
    overflow: visible;
}

.caret {
    border: 4px solid transparent;
    border-top: 6px solid currentColor;
    border-bottom: none;
}

/* title bar */
.titlebar {
    display: flex;
    align-items: center;
    height: 29px;
    padding: 0 3px;
    background: linear-gradient(to right, #edf3f9, #f6eff7 75%);
    color: #111;
}

.titlebar h1 {
    flex: 1;
    margin-left: 8px;
    font-family: "Noto Sans", "Open Sans", sans-serif;
}

.app-logo {
    display: flex;
    flex-direction: column;
    align-items: center;
    width: 18px;
    height: 20px;
    border-radius: 3px;
    background: linear-gradient(#ff6a10 70%, #8f3503 70%);
    color: #fff;
}

.app-logo b {
    font-size: 12px;
    line-height: 15px;
}

.app-logo i {
    font-size: 4px;
    line-height: 4px;
    font-style: normal;
}

.window-buttons {
    display: flex;
}

.window-buttons button {
    width: 58px;
    height: 28px;
}

/* document tabs */
.tabstrip {
    display: flex;
    align-items: flex-end;
    height: 40px;
    background: #cbcbcb;
}

.quick {
    display: flex;
    align-items: center;
    width: 241px;
    height: 40px;
    padding-left: 10px;
    color: #666;
}

.quick .caret {
    margin-left: 6px;
}

.file {
    margin-left: 21px;
}

.save {
    margin-left: 22px;
}

.undo {
    margin-left: 22px;
}

.redo {
    margin-left: 14px;
    color: #999;
}

.home-tab,
.new-tab {
    height: 35px;
    border-radius: 5px 5px 0 0;
    background: #b9b9b9;
}

.home-tab {
    width: 49px;
    padding: 5px 0 0 4px;
}

.doc-tab {
    display: flex;
    flex: 1;
    align-items: center;
    height: 35px;
    margin: 0 6px 0 5px;
    padding: 1px 8px 0 4px;
    border-radius: 5px 5px 0 0;
    background: #f1f1f1;
}

.doc-name {
    display: flex;
    flex: 1;
    align-items: center;
    justify-content: center;
    gap: 5px;
    font-size: 15px;
}

.new-tab {
    width: 34px;
}

.account {
    display: flex;
    align-items: center;
    gap: 21px;
    height: 40px;
    padding: 0 15px;
}

.avatar {
    margin-left: 6px;
}

/* ribbon */
.toolbar {
    display: flex;
    height: 106px;
    background: linear-gradient(#c8c8c8, #c8c8c8) 0 102px / 100% 1px no-repeat #f1f1f1;
}

.workspace {
    gap: 6px;
    width: 138px;
    height: 76px;
    margin: 13px 5px 0 14px;
    padding-left: 2px;
    border: 1px solid #c8c8c8;
    border-radius: 5px;
    font-weight: bold;
}

.ribbon-tabs {
    display: flex;
    gap: 28px;
    height: 30px;
    padding-left: 15px;
}

.ribbon-tabs a {
    height: 29px;
    padding: 0 14px 0 15px;
    line-height: 28px;
    color: #333;
    text-decoration: none;
}

.ribbon-tabs .active {
    color: #0696d7;
    border-bottom: 3px solid #0696d7;
}

.groups {
    display: grid;
    grid-template-columns: 336px 336px 175px 130px 130px 105px 175px 99px 118px;
}

.group {
    display: flex;
    flex-direction: column;
    align-items: center;
    height: 67px;
    padding-left: 2px;
    border-right: 1px solid #c8c8c8;
}

.group:last-child {
    border-right: none;
}

.tools {
    display: flex;
    gap: 6px;
}

.tools button {
    width: 48px;
    height: 48px;
}

.tools .selected {
    background: #0696d7;
}

.menu {
    gap: 3px;
    height: 19px;
    padding-top: 2px;
}

/* canvas and floating panels */
.viewport {
    position: relative;
    flex: 1;
    min-height: 0;
}

.scene {
    position: absolute;
    inset: 0;
    width: 100%;
    height: 100%;
}

.board-text {
    font-size: 12px;
    font-weight: bold;
    fill: #0c1a14;
}

.browser,
.comments {
    position: absolute;
    left: 5px;
    width: 374px;
}

.browser {
    top: 5px;
}

.panel-head,
.comments {
    display: flex;
    align-items: center;
    height: 31px;
    border: 1px solid #c8c8c8;
    border-bottom-width: 2px;
    background: #f1f1f1;
    color: #555;
}

.panel-head {
    gap: 12px;
    padding: 0 13px 0 5px;
}

.panel-head h2,
.comments h2 {
    flex: 1;
}

.comments {
    bottom: 6px;
    padding: 0 13px 0 30px;
    border-top: none;
}

.tree {
    padding: 4px 0 0 23px;
}

.tree ul {
    padding-left: 23px;
}

.row {
    display: flex;
    align-items: center;
    height: 30px;
}

.toggle {
    flex: none;
    width: 22px;
    justify-content: flex-start;
}

.tree ul ul {
    padding-left: 44px;
}

.chip {
    display: flex;
    align-items: center;
    height: 25px;
    background: #f1f1f1;
}

.cell {
    display: flex;
    flex: none;
    align-items: center;
    justify-content: center;
    width: 31px;
    height: 25px;
    padding-right: 3px;
    border-right: 1px solid #eee;
    color: #333;
}

.narrow {
    width: 26px;
    color: #777;
}

.eye {
    width: 20px;
    height: 14px;
}

.folder {
    width: 21px;
    height: 17px;
}

.label {
    padding: 0 12px 0 10px;
    white-space: nowrap;
}

.highlight {
    display: flex;
    align-items: center;
    height: 20px;
    background: #999;
    color: #fff;
    font-weight: bold;
}

.highlight .cell {
    height: 20px;
}

.root input {
    appearance: none;
    width: 17px;
    height: 17px;
    margin: 0 8px 0 5px;
    border: 1px solid #555;
    border-radius: 50%;
    background: radial-gradient(#222 3px, #c9d6e6 4px, #f4f7fa 8px);
}

.cube {
    position: absolute;
    top: 0;
    right: 19px;
    overflow: visible;
}

.face {
    font-size: 9px;
    font-weight: bold;
    fill: #444;
}

.top {
    font-size: 11px;
}

.axis {
    font-size: 14px;
    font-weight: bold;
}

.cube-menu {
    position: absolute;
    top: 102px;
    right: 10px;
}

.navbar {
    position: absolute;
    bottom: 8px;
    left: 50%;
    display: flex;
    align-items: center;
    gap: 8px;
    width: 296px;
    height: 30px;
    margin-left: -147px;
    padding-left: 4px;
    background: #f1f1f1;
}

.navbar button {
    gap: 5px;
}

.navbar .plain {
    margin-right: 4px;
}

.navbar .tight {
    gap: 2px;
}

/* timeline */
.timeline {
    display: flex;
    align-items: center;
    height: 61px;
    padding: 0 16px 0 11px;
    border-top: 1px solid #c8c8c8;
    background: #f1f1f1;
}

.playback {
    display: flex;
    gap: 11px;
}

.features {
    display: flex;
    align-items: flex-start;
    align-self: flex-start;
    gap: 10px;
    height: 51px;
    margin-left: 28px;
    padding-top: 19px;
    background:
        repeating-linear-gradient(to right, #c8c8c8 0 3px, transparent 3px 30px) 10px 43px / 273px 6px no-repeat,
        linear-gradient(#c8c8c8, #c8c8c8) 10px 49px / 273px 2px no-repeat;
}

.marker {
    align-self: flex-start;
    margin: 11px auto 0 -3px;
}

.settings {
    color: #666;
}
```
